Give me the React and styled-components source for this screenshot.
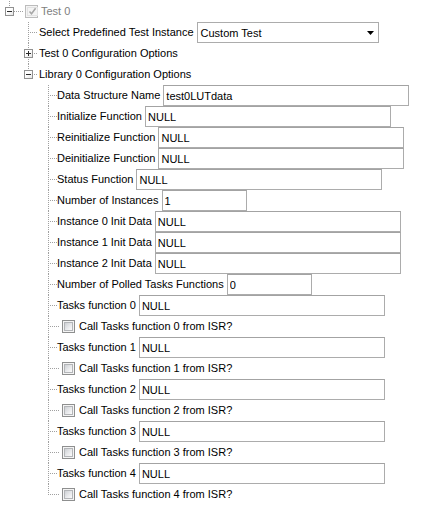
import React from "react";
import styled, { createGlobalStyle } from "styled-components";

const GlobalStyle = createGlobalStyle`
  html, body {
    margin: 0;
    background: #ffffff;
  }
  body {
    font-family: "Liberation Sans", Arial, sans-serif;
    font-size: 11px;
    color: #000;
  }
`;

const Tree = styled.div`
  width: 432px;
  height: 508px;
  padding-top: 1px;
  box-sizing: border-box;
  overflow: hidden;
`;

const Row = styled.div`
  display: flex;
  align-items: center;
  height: 21px;
  padding-left: ${(p) => p.$indent}px;
  white-space: nowrap;
`;

// dotted connector: vertical guide + horizontal stub to the item
const Lead = styled.span`
  position: relative;
  flex: none;
  align-self: stretch;
  width: ${(p) => p.$width}px;
  margin-right: ${(p) => p.$gap || 0}px;

  &::before {
    content: "";
    position: absolute;
    left: 0;
    top: 0;
    height: ${(p) => (p.$last ? 11 : 21)}px;
    border-left: 1px dotted #a0a0a0;
  }
  &::after {
    content: "";
    position: absolute;
    left: 0;
    right: 0;
    top: 10px;
    border-top: 1px dotted #a0a0a0;
  }
`;

const Expander = styled.span`
  position: absolute;
  left: -4px;
  top: 6px;
  z-index: 1;
  width: 9px;
  height: 9px;
  box-sizing: border-box;
  border: 1px solid #919191;
  background: linear-gradient(135deg, #ffffff 40%, #e6e6e6);
  display: flex;

  svg {
    display: block;
  }
`;

const Label = styled.span`
  color: ${(p) => (p.$muted ? "#808080" : "#000")};
  line-height: 13px;
`;

const Field = styled.input`
  width: ${(p) => p.$w}px;
  height: 21px;
  margin: 0 0 0 3px;
  padding: 0 2px;
  box-sizing: border-box;
  border: 1px solid #acacac;
  border-top-color: #a3a3a3;
  font-family: "Liberation Sans", Arial, sans-serif;
  font-size: 11px;
  color: #000;
  background: #fff;
  outline: none;
`;

const Combo = styled.div`
  width: 182px;
  height: 21px;
  margin-left: 3px;
  padding: 0 4px 0 3px;
  box-sizing: border-box;
  border: 1px solid #acacac;
  display: flex;
  align-items: center;
  justify-content: space-between;
  background: #fff;
`;

const Check = styled.span`
  flex: none;
  width: 13px;
  height: 13px;
  box-sizing: border-box;
  border: 1px solid ${(p) => (p.$disabled ? "#bcbcbc" : "#8e8f8f")};
  padding: 1px;
  background: #f4f4f4;
  margin-left: ${(p) => p.$ml}px;
  margin-right: ${(p) => p.$mr}px;
  display: flex;
`;

const CheckInner = styled.span`
  flex: 1;
  box-sizing: border-box;
  border: 1px solid ${(p) => (p.$disabled ? "#e2e2e2" : "#b3b5b8")};
  background: ${(p) =>
    p.$disabled
      ? "#f4f4f4"
      : "linear-gradient(135deg, #cdd0d4 0%, #e9eaec 55%, #fbfbfb 100%)"};
  display: flex;
  align-items: center;
  justify-content: center;
`;

const Glyph = ({ open }) => (
  <svg width="7" height="7" viewBox="0 0 7 7">
    <rect x="1" y="3" width="5" height="1" fill="#2b2b2b" />
    {!open && <rect x="3" y="1" width="1" height="5" fill="#2b2b2b" />}
  </svg>
);

const Arrow = () => (
  <svg width="7" height="4" viewBox="0 0 7 4">
    <path d="M0 0H7L3.5 4Z" fill="#000" />
  </svg>
);

const Tick = () => (
  <svg width="9" height="9" viewBox="0 0 9 9">
    <path
      d="M1.5 4.5L3.5 6.8L7.6 1.2"
      fill="none"
      stroke="#a6a6a6"
      strokeWidth="1.5"
    />
  </svg>
);

const CheckBox = ({ disabled, checked, ml, mr }) => (
  <Check $disabled={disabled} $ml={ml} $mr={mr}>
    <CheckInner $disabled={disabled}>{checked && <Tick />}</CheckInner>
  </Check>
);

const options = [
  { label: "Data Structure Name", value: "test0LUTdata", w: 246 },
  { label: "Initialize Function", value: "NULL", w: 246 },
  { label: "Reinitialize Function", value: "NULL", w: 246 },
  { label: "Deinitialize Function", value: "NULL", w: 246 },
  { label: "Status Function", value: "NULL", w: 246 },
  { label: "Number of Instances", value: "1", w: 85 },
  { label: "Instance 0 Init Data", value: "NULL", w: 246 },
  { label: "Instance 1 Init Data", value: "NULL", w: 246 },
  { label: "Instance 2 Init Data", value: "NULL", w: 246 },
  { label: "Number of Polled Tasks Functions", value: "0", w: 85 },
];

const tasks = [0, 1, 2, 3, 4];

const App = () => {
  const libRows = [];
  options.forEach((o) => libRows.push({ type: "field", ...o }));
  tasks.forEach((i) => {
    libRows.push({ type: "field", label: `Tasks function ${i}`, value: "NULL", w: 246 });
    libRows.push({ type: "check", label: `Call Tasks function ${i} from ISR?` });
  });

  return (
    <>
      <GlobalStyle />
      <Tree>
        {/* root */}
        <Row $indent={9}>
          <Lead $width={14} $gap={2} $last>
            <Expander>
              <Glyph open />
            </Expander>
          </Lead>
          <CheckBox disabled checked ml={0} mr={3} />
          <Label $muted>Test 0</Label>
        </Row>

        {/* test 0 children */}
        <Row $indent={28}>
          <Lead $width={9} $gap={2} />
          <Label>Select Predefined Test Instance</Label>
          <Combo>
            <span>Custom Test</span>
            <Arrow />
          </Combo>
        </Row>
        <Row $indent={28}>
          <Lead $width={9} $gap={2}>
            <Expander>
              <Glyph />
            </Expander>
          </Lead>
          <Label>Test 0 Configuration Options</Label>
        </Row>
        <Row $indent={28}>
          <Lead $width={9} $gap={2} $last>
            <Expander>
              <Glyph open />
            </Expander>
          </Lead>
          <Label>Library 0 Configuration Options</Label>
        </Row>

        {/* library 0 children */}
        {libRows.map((r, idx) => {
          const last = idx === libRows.length - 1;
          if (r.type === "check") {
            return (
              <Row $indent={48} key={r.label}>
                <Lead $width={11} $last={last} />
                <CheckBox ml={3} mr={4} />
                <Label>{r.label}</Label>
              </Row>
            );
          }
          return (
            <Row $indent={48} key={r.label}>
              <Lead $width={9} $last={last} />
              <Label>{r.label}</Label>
              <Field readOnly value={r.value} $w={r.w} />
            </Row>
          );
        })}
      </Tree>
    </>
  );
};

export default App;
